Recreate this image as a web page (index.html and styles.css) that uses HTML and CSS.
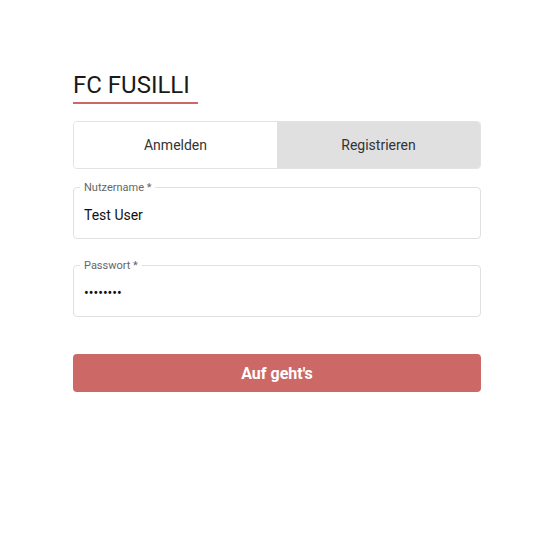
FILE: index.html
```html
<!DOCTYPE html>
<html lang="de">
<head>
<meta charset="utf-8">
<title>FC Fusilli</title>
<link rel="stylesheet" href="styles.css">
</head>
<body>
<main class="page">
  <h1 class="brand">FC FUSILLI</h1>
  <div class="tabs">
    <button class="tab">Anmelden</button>
    <button class="tab tab-active">Registrieren</button>
  </div>
  <form class="form">
    <fieldset class="field">
      <legend class="field-label">Nutzername *</legend>
      <input class="field-input" type="text" value="Test User">
    </fieldset>
    <fieldset class="field field-second">
      <legend class="field-label">Passwort *</legend>
      <input class="field-input" type="password" value="12345678">
    </fieldset>
    <button class="submit" type="button">Auf geht's</button>
  </form>
</main>
</body>
</html>
```
FILE: styles.css
```css
html, body {
  margin: 0;
  padding: 0;
  background: #ffffff;
}
body {
  font-family: Roboto, "Liberation Sans", sans-serif;
  color: #222;
}
.page {
  width: 408px;
  margin: 0 0 0 73px;
  padding-top: 71px;
  display: flex;
  flex-direction: column;
}
.brand {
  align-self: flex-start;
  margin: 0;
  font-size: 24px;
  font-weight: 400;
  line-height: 28px;
  color: #1a1a1a;
  padding: 0 8px 3px 0;
  border-bottom: 2px solid #cc6966;
}
.tabs {
  margin-top: 17px;
  display: flex;
  height: 48px;
  box-sizing: border-box;
  border: 1px solid #e3e3e3;
  border-radius: 4px;
  overflow: hidden;
}
.tab {
  flex: 1;
  border: 0;
  margin: 0;
  padding: 0;
  background: #ffffff;
  font-family: inherit;
  font-size: 14px;
  color: #333;
}
.tab-active {
  background: #e0e0e0;
}
.form {
  margin-top: 12px;
  display: flex;
  flex-direction: column;
}
.field {
  margin: 0;
  padding: 0 10px 6px 10px;
  border: 1px solid #e0e0e0;
  border-radius: 4px;
  min-width: 0;
}
.field-second {
  margin-top: 20px;
}
.field-label {
  margin-left: -4px;
  padding: 0 4px;
  font-size: 11px;
  line-height: 13px;
  color: #666;
}
.field-input {
  display: block;
  width: 100%;
  box-sizing: border-box;
  height: 38px;
  border: 0;
  padding: 3px 0 0 0;
  margin: 0;
  outline: none;
  background: transparent;
  font-family: inherit;
  font-size: 14px;
  color: #111;
}
.submit {
  margin-top: 37px;
  height: 38px;
  border: 0;
  border-radius: 4px;
  background: #cc6966;
  color: #ffffff;
  font-family: inherit;
  font-size: 16px;
  font-weight: 700;
}
```
